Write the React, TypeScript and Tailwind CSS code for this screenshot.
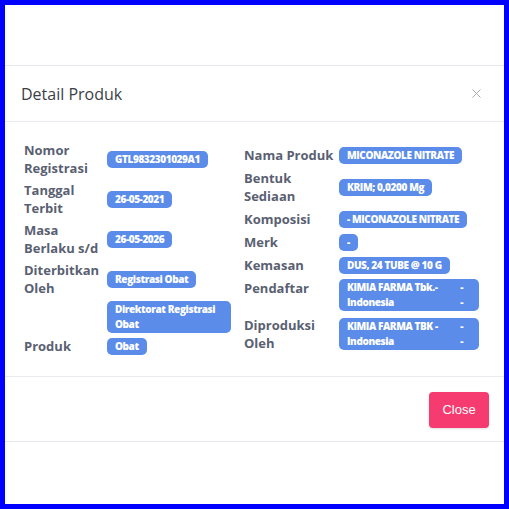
import { X } from "lucide-react";

type Row = { label: string; value?: string; labelTop?: boolean; pair?: [string, string][] };

const leftRows: Row[] = [
  { label: "Nomor Registrasi", value: "GTL9832301029A1" },
  { label: "Tanggal Terbit", value: "26-05-2021" },
  { label: "Masa Berlaku s/d", value: "26-05-2026" },
  { label: "Diterbitkan Oleh", value: "Registrasi Obat" },
  { label: "", value: "Direktorat Registrasi Obat" },
  { label: "Produk", value: "Obat" },
];

const rightRows: Row[] = [
  { label: "Nama Produk", value: "MICONAZOLE NITRATE" },
  { label: "Bentuk Sediaan", value: "KRIM; 0,0200 Mg" },
  { label: "Komposisi", value: "- MICONAZOLE NITRATE" },
  { label: "Merk", value: "-" },
  { label: "Kemasan", value: "DUS, 24 TUBE @ 10 G" },
  {
    label: "Pendaftar",
    labelTop: true,
    pair: [
      ["KIMIA FARMA Tbk.-", "-"],
      ["Indonesia", "-"],
    ],
  },
  {
    label: "Diproduksi Oleh",
    pair: [
      ["KIMIA FARMA TBK -", "-"],
      ["Indonesia", "-"],
    ],
  },
];

function Badge({ row }: { row: Row }) {
  if (row.pair) {
    return (
      <div className="w-full rounded-[5px] bg-[#5b8ce9] py-[1px] pl-2 pr-[16px] text-[10px] font-extrabold leading-[15px] tracking-[-0.4px] text-white">
        {row.pair.map(([a, b]) => (
          <div key={a} className="flex justify-between">
            <span>{a}</span>
            <span>{b}</span>
          </div>
        ))}
      </div>
    );
  }
  return (
    <span className="block rounded-[5px] bg-[#5b8ce9] px-2 py-[1px] text-[10px] font-extrabold leading-[15px] tracking-[-0.4px] text-white">
      {row.value}
    </span>
  );
}

function Column({ rows, labelW, valueW, gap }: { rows: Row[]; labelW: string; valueW: string; gap: string }) {
  return (
    <div className={`flex flex-col ${gap}`}>
      {rows.map((row, i) => (
        <div key={i} className="flex items-center">
          <div
            className={`${labelW} shrink-0 text-[13px] font-bold leading-[18px] text-[#5a5f72] ${row.labelTop ? "self-start" : ""}`}
          >
            {row.label}
          </div>
          <div className={`${valueW} flex items-start`}>
            <Badge row={row} />
          </div>
        </div>
      ))}
    </div>
  );
}

export default function App() {
  return (
    <div
      className="h-[509px] w-[509px] overflow-hidden border-[5px] border-[#0000fe] bg-white"
      style={{ fontFamily: '"Open Sans", "Noto Sans", sans-serif' }}
    >
      <div className="mt-[60px] border-y border-[#e6e8ee] bg-white">
        {/* header */}
        <div className="flex h-[56px] items-center justify-between border-b border-[#e9ebf0] pl-[16px] pr-[20px]">
          <h2 className="text-[16px] font-normal leading-[24px] text-[#3b3e47]">Detail Produk</h2>
          <X className="h-[15px] w-[15px] text-[#a9abb0]" strokeWidth={1.6} />
        </div>

        {/* body */}
        <div className="flex gap-[9px] border-b border-[#e9ebf0] pb-[21px] pl-[19px] pt-[19px]">
          <div className="w-[211px]">
            <Column rows={leftRows} labelW="w-[83px]" valueW="w-[124px]" gap="gap-[4px]" />
          </div>
          <div className="pt-[5px]">
            <Column rows={rightRows} labelW="w-[95px]" valueW="w-[140px]" gap="gap-[5px]" />
          </div>
        </div>

        {/* footer */}
        <div className="flex justify-end pb-[13px] pr-[15px] pt-[15px]">
          <button className="h-[36px] w-[60px] rounded-[4px] bg-[#f63b70] text-[13px] text-white shadow-sm" style={{ fontFamily: '"Liberation Sans", Arial, sans-serif' }}>
            Close
          </button>
        </div>
      </div>
    </div>
  );
}
